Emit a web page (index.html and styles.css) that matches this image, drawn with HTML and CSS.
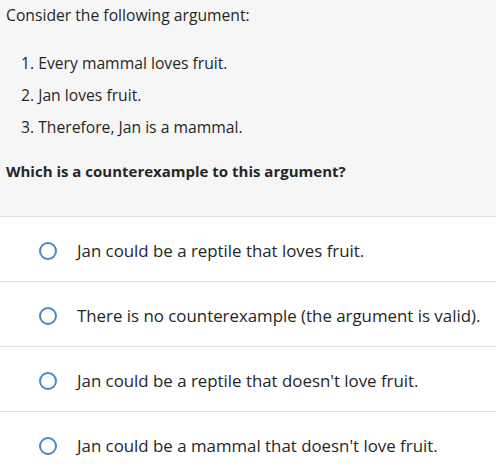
FILE: index.html
```html
<!DOCTYPE html>
<html lang="en">
<head>
<meta charset="utf-8">
<title>Counterexample question</title>
<link rel="stylesheet" href="styles.css">
</head>
<body>
<section class="question">
  <p class="intro">Consider the following argument:</p>
  <ol class="premises">
    <li>Every mammal loves fruit.</li>
    <li>Jan loves fruit.</li>
    <li>Therefore, Jan is a mammal.</li>
  </ol>
  <p class="prompt">Which is a counterexample to this argument?</p>
</section>
<ul class="options">
  <li class="option"><span class="radio"></span><span class="label">Jan could be a reptile that loves fruit.</span></li>
  <li class="option"><span class="radio"></span><span class="label">There is no counterexample (the argument is valid).</span></li>
  <li class="option"><span class="radio"></span><span class="label">Jan could be a reptile that doesn't love fruit.</span></li>
  <li class="option"><span class="radio"></span><span class="label">Jan could be a mammal that doesn't love fruit.</span></li>
</ul>
</body>
</html>
```
FILE: styles.css
```css
* { box-sizing: border-box; }
html, body { margin: 0; padding: 0; background: #ffffff; }
body {
  font-family: "Open Sans", "Liberation Sans", sans-serif;
  font-size: 15.7px;
  line-height: 20px;
  color: #262626;
}
.question {
  background: #f6f6f6;
  padding: 5px 6px 35px 6px;
  border-bottom: 1px solid #e2e2e2;
}
.intro { margin: 0; }
.premises {
  margin: 28px 0 0 0;
  padding: 0 0 0 15px;
  list-style-position: inside;
}
.premises li { margin-bottom: 12px; }
.premises li:last-child { margin-bottom: 0; }
.prompt {
  margin: 24px 0 0 0;
  font-weight: 700;
  font-size: 15px;
}
.options { list-style: none; margin: 0; padding: 0; }
.option {
  display: flex;
  align-items: center;
  gap: 20px;
  padding: 24px 0 20px 39px;
  border-top: 1px solid #e2e2e2;
  font-size: 16.85px;
}
.option:first-child { border-top: none; }
.radio {
  width: 18px;
  height: 18px;
  border: 2px solid #4a86c8;
  border-radius: 50%;
  flex: none;
}
```
